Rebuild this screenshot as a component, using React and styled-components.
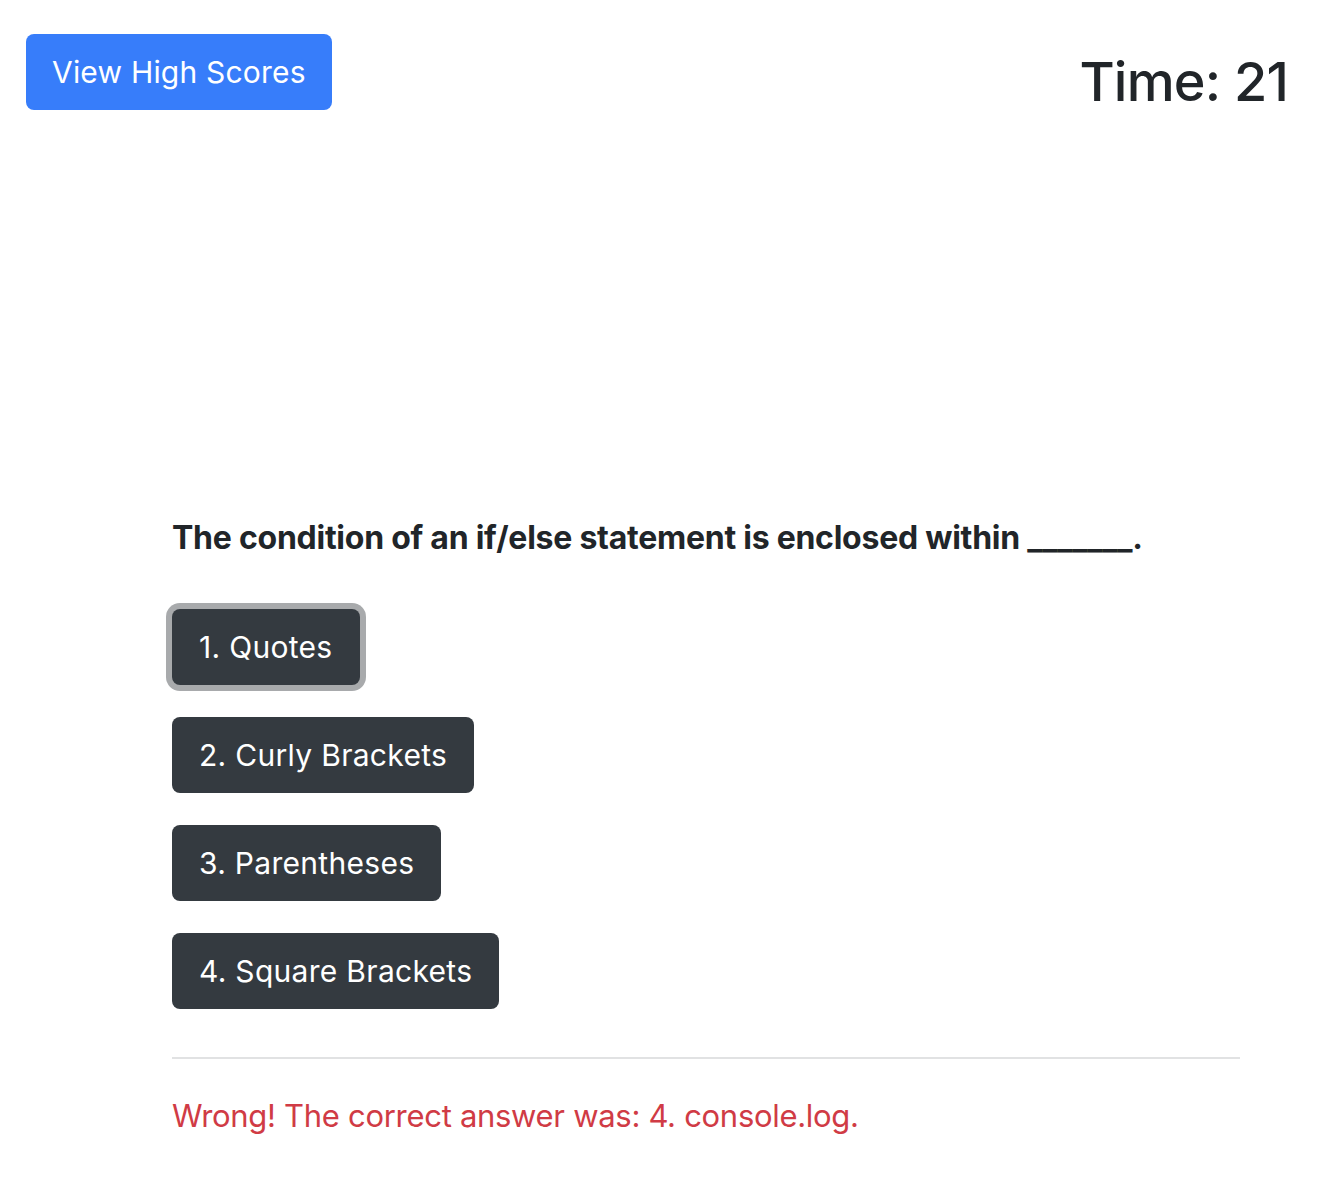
import React from "react";
import styled, { createGlobalStyle } from "styled-components";

const GlobalStyle = createGlobalStyle`
    body {
        margin: 0;
        background: #fff;
        font-family: Inter, "Noto Sans", sans-serif;
        color: #212529;
    }
`;

const Header = styled.header`
    display: flex;
    justify-content: space-between;
    align-items: flex-start;
    padding: 34px 56px 0 26px;
`;

const ScoresButton = styled.button`
    height: 76px;
    padding: 0 26px;
    border: none;
    border-radius: 8px;
    background: #377dfa;
    color: #fff;
    font-family: inherit;
    font-size: 30px;
    letter-spacing: 0.2px;
    cursor: pointer;
`;

const Timer = styled.div`
    font-size: 54px;
    font-weight: 500;
    line-height: 1;
    margin-top: 21px;
    letter-spacing: -0.8px;
`;

const Quiz = styled.main`
    width: 1068px;
    margin: 409px 0 0 172px;
`;

const Question = styled.h2`
    margin: 0 0 52px;
    font-size: 32px;
    font-weight: 700;
    line-height: 38px;
    letter-spacing: -0.25px;
`;

const Choices = styled.div`
    display: flex;
    flex-direction: column;
    align-items: flex-start;
    gap: 32px;
`;

const Choice = styled.button`
    height: 76px;
    padding: 0 27px;
    border: none;
    border-radius: 8px;
    background: #343a40;
    color: #fff;
    font-family: inherit;
    font-size: 30px;
    letter-spacing: 0.3px;
    box-shadow: ${(p) => (p.$focused ? "0 0 0 6px #a8aaac" : "none")};
    cursor: pointer;
`;

const Divider = styled.hr`
    margin: 48px 0 0;
    border: none;
    border-top: 2px solid #e1e2e3;
`;

const Feedback = styled.p`
    margin: 38px 0 0;
    font-size: 31px;
    color: #d03b45;
    letter-spacing: -0.3px;
`;

const choices = ["1. Quotes", "2. Curly Brackets", "3. Parentheses", "4. Square Brackets"];

const App = () => {
    return (
        <>
            <GlobalStyle />
            <Header>
                <ScoresButton>View High Scores</ScoresButton>
                <Timer>Time: 21</Timer>
            </Header>
            <Quiz>
                <Question>The condition of an if/else statement is enclosed within _______.</Question>
                <Choices>
                    {choices.map((c, i) => (
                        <Choice key={c} $focused={i === 0}>
                            {c}
                        </Choice>
                    ))}
                </Choices>
                <Divider />
                <Feedback>Wrong! The correct answer was: 4. console.log.</Feedback>
            </Quiz>
        </>
    );
};

export default App;
